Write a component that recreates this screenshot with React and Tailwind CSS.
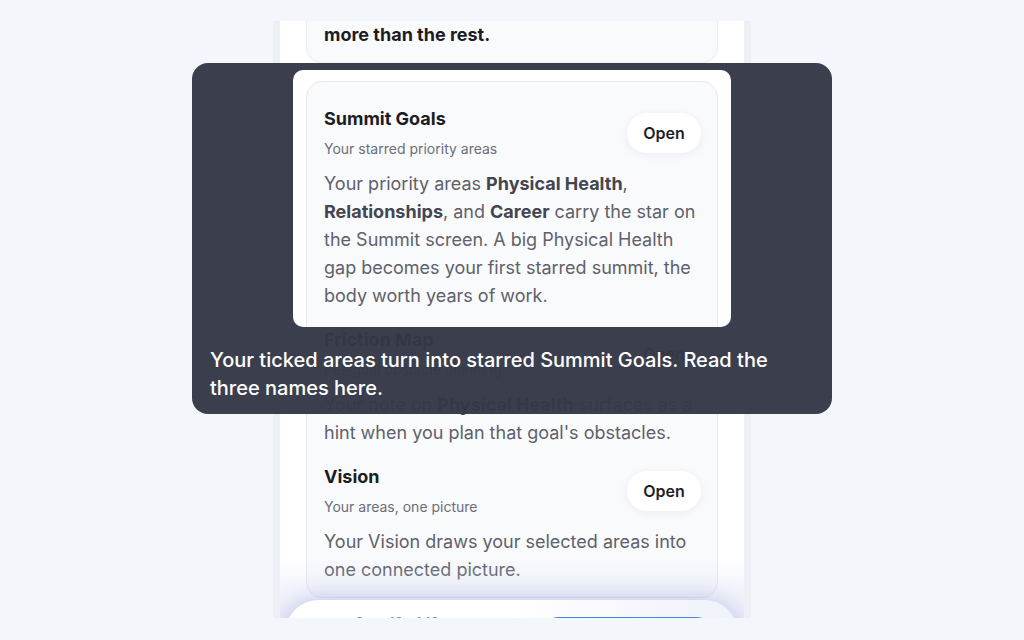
import React from "react";

const sections = [
  {
    title: "Summit Goals",
    sub: "Your starred priority areas",
    body: [
      <>Your priority areas <b className="font-bold text-[#43464f]">Physical Health</b>,</>,
      <><b className="font-bold text-[#43464f]">Relationships</b>, and <b className="font-bold text-[#43464f]">Career</b> carry the star on</>,
      <>the Summit screen. A big Physical Health</>,
      <>gap becomes your first starred summit, the</>,
      <>body worth years of work.</>,
    ],
  },
  {
    title: "Friction Map",
    sub: "Per-goal obstacle planning",
    body: [
      <>Your note on <b className="font-bold text-[#43464f]">Physical Health</b> surfaces as a</>,
      <>hint when you plan that goal's obstacles.</>,
    ],
  },
  {
    title: "Vision",
    sub: "Your areas, one picture",
    body: [
      <>Your Vision draws your selected areas into</>,
      <>one connected picture.</>,
    ],
  },
];

const Section = ({ title, sub, body, first }) => (
  <div className={first ? "" : "mt-[18px]"}>
    <div className="flex items-center justify-between">
      <div>
        <div className="text-[18px] font-bold leading-6 text-[#1c1d22]">{title}</div>
        <div className="mt-2 text-[14px] leading-5 text-[#6b6e78]">{sub}</div>
      </div>
      <button className="h-10 w-[74px] rounded-full bg-white text-[16px] font-semibold text-[#1e1f24] shadow-[0_2px_10px_rgba(30,40,90,0.06)]">
        Open
      </button>
    </div>
    <div className="mt-[11px] text-[18px] leading-[28px] text-[#5e616b]">
      {body.map((line, i) => (
        <div key={i} className="whitespace-nowrap">
          {line}
        </div>
      ))}
    </div>
  </div>
);

const App = () => {
  return (
    <div className="relative h-[640px] w-[1024px] overflow-hidden bg-[#f3f6fb] font-['Inter',sans-serif]">
      {/* Phone viewport */}
      <div className="flex justify-center pt-[21px]">
        <div className="relative h-[597px] w-[478px] overflow-hidden border-x-[7px] border-[#eeeff4] bg-white">
          <div className="flex flex-col gap-[18px] px-[26px]">
            <div className="rounded-b-2xl border border-t-0 border-[#ebecf1] bg-[#f9fafc] px-[17px] pb-[13px]">
              <div className="text-[18px] font-bold leading-[28px] text-[#1c1d22]">more than the rest.</div>
            </div>

            <div className="rounded-2xl border border-[#e6e8ef] bg-[#f9fafc] pb-[13px] pl-[17px] pr-4 pt-[25px]">
              {sections.map((s, i) => (
                <Section key={s.title} {...s} first={i === 0} />
              ))}
            </div>
          </div>

          {/* bottom fade */}
          <div className="pointer-events-none absolute inset-x-0 bottom-0 h-[60px] bg-gradient-to-b from-transparent to-[#d6daf0]/55" />

          {/* floating step bar */}
          <div className="absolute left-[5px] right-[6px] top-[579px] h-[70px] rounded-[34px] bg-gradient-to-r from-white via-white to-[#f0f2fb] shadow-[0_-4px_20px_rgba(120,135,215,0.3)]">
            <div className="absolute left-[70px] top-[13px] text-[14px] leading-5 text-[#8a8d96]">Step 12 of 12</div>
            <div className="absolute left-[252px] right-[20px] top-[17px] h-11 rounded-full bg-[#4a82e2]" />
          </div>
        </div>
      </div>

      {/* Coach mark overlay with spotlight */}
      <div className="absolute left-[192px] top-[63px] flex h-[351px] w-[640px] flex-col justify-end overflow-hidden rounded-2xl px-[18px] pb-[12px]">
        <div className="absolute left-[101px] top-[7px] h-[257px] w-[438px] rounded-[10px] shadow-[0_0_0_2000px_rgba(52,56,70,0.965)]" />
        <p className="relative text-[20px] font-medium leading-[28px] text-white">
          Your ticked areas turn into starred Summit Goals. Read the
          <br />
          three names here.
        </p>
      </div>
    </div>
  );
};

export default App;
